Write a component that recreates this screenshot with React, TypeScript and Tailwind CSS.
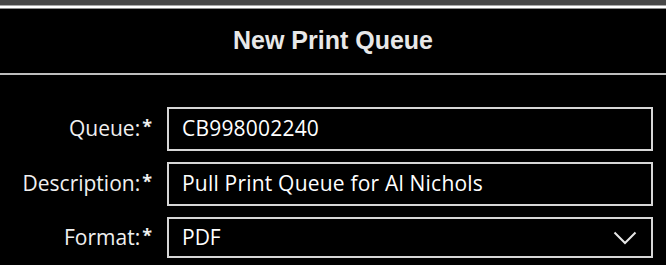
const fields = [
  { label: "Queue:", value: "CB998002240", height: "h-[44px]" },
  { label: "Description:", value: "Pull Print Queue for Al Nichols", height: "h-[44px]" },
];

export default function App() {
  return (
    <div className="h-[265px] w-[666px] overflow-hidden bg-black text-white">
      {/* window chrome strip */}
      <div className="h-[5px] bg-[#474747]" />
      <div className="h-[1px] bg-[#a8a8a8]" />
      <div className="h-[2px] bg-white" />
      <div className="h-[1px] bg-[#8a8a8a]" />

      <header className="flex h-[64px] items-center justify-center">
        <h1 className="font-['Liberation_Sans',Arial,sans-serif] text-[25px] font-bold text-[#e8e8e8]">
          New Print Queue
        </h1>
      </header>
      <div className="h-[2px] bg-[#bdbdbd]" />

      <form className="flex flex-col gap-[11px] pt-[32px] pr-[13px] font-['Open_Sans',sans-serif] font-medium">
        {fields.map((f) => (
          <Row key={f.label} label={f.label} height={f.height}>
            <span className="truncate text-[21px] tracking-[0.2px]">{f.value}</span>
          </Row>
        ))}
        <Row label="Format:" height="h-[41px]">
          <span className="flex-1 text-[21px]">PDF</span>
          <svg
            viewBox="0 0 24 14"
            className="mr-[4px] h-[14px] w-[24px] text-[#e6e6e6]"
            fill="none"
            stroke="currentColor"
            strokeWidth={2}
          >
            <path d="M1.5 1.5 L12 12 L22.5 1.5" />
          </svg>
        </Row>
      </form>
    </div>
  );
}

function Row({
  label,
  height,
  children,
}: {
  label: string;
  height: string;
  children: React.ReactNode;
}) {
  return (
    <div className="flex items-center gap-[15px]">
      <label className="flex w-[152px] shrink-0 items-start justify-end text-[21px] text-[#f0f0f0]">
        {label}
        <span className="ml-[2px] text-[18px] font-bold leading-[26px]">*</span>
      </label>
      <div
        className={`flex ${height} flex-1 items-center border-2 border-[#d6d6d6] pl-[13px] pr-[10px]`}
      >
        {children}
      </div>
    </div>
  );
}
